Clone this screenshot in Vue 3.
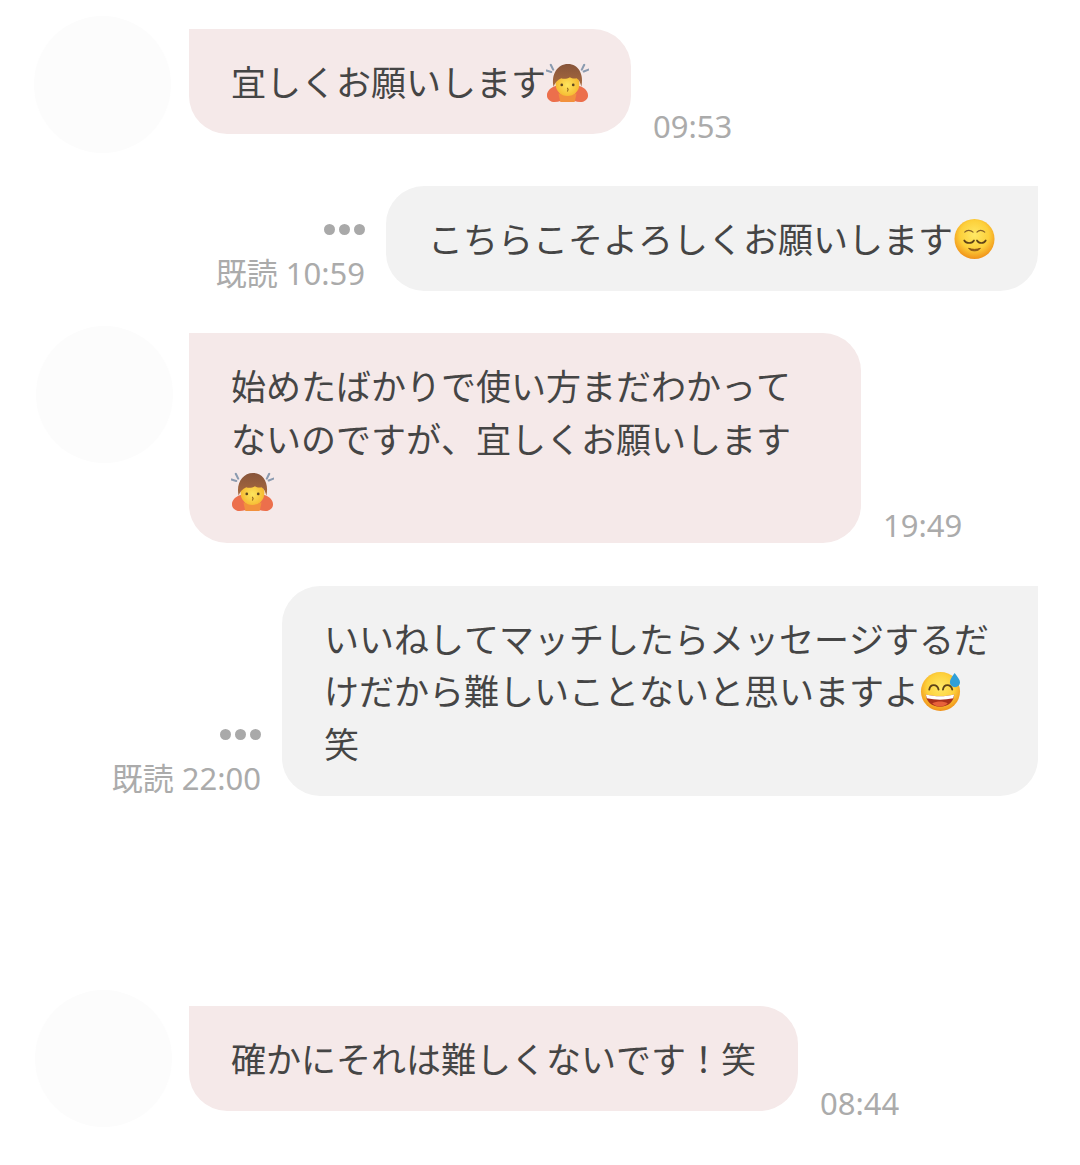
<script setup>
const messages = [
  { id: 1, side: 'left', avatar: 'a1', before: '宜しくお願いします', emoji: 'bow', after: '', time: '09:53', space: 's52' },
  { id: 2, side: 'right', before: 'こちらこそよろしくお願いします', emoji: 'relief', after: '', time: '既読 10:59', space: 's42' },
  { id: 3, side: 'left', avatar: 'a3', before: '始めたばかりで使い方まだわかってないのですが、宜しくお願いします', emoji: 'bow', after: '', time: '19:49', space: 's43', raised: true },
  { id: 4, side: 'right', before: 'いいねしてマッチしたらメッセージするだけだから難しいことないと思いますよ', emoji: 'sweat', after: '笑', time: '既読 22:00', space: 's210' },
  { id: 5, side: 'left', avatar: 'a5', before: '確かにそれは難しくないです！笑', emoji: '', after: '', time: '08:44', space: '' },
]
</script>

<template>
  <main class="chat">
    <svg class="defs" width="0" height="0" aria-hidden="true">
      <defs>
        <radialGradient id="faceGrad" cx="50%" cy="40%" r="60%">
          <stop offset="0%" stop-color="#ffe866" />
          <stop offset="60%" stop-color="#fdd03a" />
          <stop offset="100%" stop-color="#f0911a" />
        </radialGradient>
        <radialGradient id="bowFace" cx="50%" cy="55%" r="55%">
          <stop offset="0%" stop-color="#fde65e" />
          <stop offset="100%" stop-color="#f5b52c" />
        </radialGradient>
        <linearGradient id="hairGrad" x1="0" y1="0" x2="0" y2="1">
          <stop offset="0%" stop-color="#87543a" />
          <stop offset="100%" stop-color="#a96a3e" />
        </linearGradient>
      </defs>
    </svg>

    <section v-for="m in messages" :key="m.id" class="row" :class="[m.side, m.space]">
      <div v-if="m.side === 'left'" class="avatar" :class="m.avatar"></div>

      <div v-if="m.side === 'right'" class="meta">
        <div class="dots"><i></i><i></i><i></i></div>
        <div class="time">{{ m.time }}</div>
      </div>

      <div class="bubble">
        {{ m.before }}<svg v-if="m.emoji === 'bow'" class="emoji bow" viewBox="0 0 45 42" aria-hidden="true">
          <path d="M1 34c0-5 5-9 10-10l4 8h15l4-8c5 1 10 5 10 10 0 4-4 7-8 7-5 0-8-2-10-4h-7c-2 2-5 4-10 4-4 0-8-3-8-7z" fill="#ec6f4c" />
          <path d="M13 32h19l-2 9H15z" fill="#f2913c" />
          <circle cx="22.500" cy="22" r="12.500" fill="url(#bowFace)" />
          <path d="M8 25C5 12 12 1 23 1c11 0 17 11 14 24-1-4-2-7-5-9-3 1-5 0-7-1-3 2-7 2-9 1-4 2-7 5-8 9z" fill="url(#hairGrad)" />
          <circle cx="16.500" cy="23" r="1.400" fill="#5c4520" />
          <circle cx="28.500" cy="23" r="1.400" fill="#5c4520" />
          <path d="M22.500 26.500c.8.800.8 2 0 3" fill="none" stroke="#9a6a20" stroke-width="1.200" stroke-linecap="round" />
          <path d="M5 2l2.500 5M0.500 8l5 1.500M40 2l-2.500 5M44.500 7l-5 2" stroke="#8b9bb0" stroke-width="2.200" stroke-linecap="round" />
        </svg><svg v-else-if="m.emoji === 'relief'" class="emoji" viewBox="0 0 43 43" aria-hidden="true">
          <circle cx="21.500" cy="21.500" r="20.500" fill="url(#faceGrad)" />
          <path d="M11.500 14.500c2-2.500 6-2.500 8.500 0M24 14.500c2-2.500 5.500-2.500 8 0" fill="none" stroke="#8a6428" stroke-width="1.200" stroke-linecap="round" />
          <path d="M11 23c2 3.500 8 3.500 10 0M24 23c2 3.500 7 3.500 9 0" fill="none" stroke="#5e4218" stroke-width="1.700" stroke-linecap="round" />
          <path d="M15.500 31c4 1.500 8 1.500 12 0-2 3.500-10 3.500-12 0z" fill="#8a5518" stroke="#8a5518" stroke-width="1" stroke-linejoin="round" />
        </svg><svg v-else-if="m.emoji === 'sweat'" class="emoji" viewBox="0 0 43 43" aria-hidden="true">
          <circle cx="21.500" cy="22" r="20" fill="url(#faceGrad)" />
          <path d="M10 20c1-6 8-6 9.500 0M24 20c1-6 8-6 9.500 0" fill="none" stroke="#5e4218" stroke-width="1.900" stroke-linecap="round" />
          <path d="M6.500 25c10 2.500 19 2.500 29 0 0 7-6 12.500-14.500 12.500S6.500 32 6.500 25z" fill="#a92f1b" />
          <path d="M6.500 25c10 2.500 19 2.500 29 0l-1 4c-9 1.800-18 1.800-27 0z" fill="#fff" />
          <path d="M13 34c5-2.500 11-2.500 16 0-4.500 4.500-11.500 4.500-16 0z" fill="#e8613a" />
          <path d="M36 3c3 4 5.500 7 5.500 9.500a5.200 5.200 0 0 1-10.400 0C31.100 10 33 7 36 3z" fill="#2f9fd8" />
        </svg>{{ m.after }}
      </div>

      <div v-if="m.side === 'left'" class="time" :class="{ raised: m.raised }">{{ m.time }}</div>
    </section>
  </main>
</template>

<style>
html, body {
  background: #ffffff;
}
</style>

<style scoped>
.chat {
  width: 1080px;
  height: 1165px;
  box-sizing: border-box;
  padding-top: 29px;
  overflow: hidden;
  background: #ffffff;
  font-family: "Noto Sans CJK JP", "Noto Sans", sans-serif;
  color: #454545;
}
.defs {
  position: absolute;
}
.row {
  display: flex;
  align-items: flex-end;
}
.row.left {
  padding-left: 34px;
}
.row.right {
  justify-content: flex-end;
  padding-right: 42px;
}
.s52 { margin-bottom: 52px; }
.s42 { margin-bottom: 42px; }
.s43 { margin-bottom: 42.500px; }
.s210 { margin-bottom: 210px; }

.avatar {
  flex: none;
  align-self: flex-start;
  width: 137px;
  height: 137px;
  margin-top: -13px;
  margin-bottom: -19px;
  margin-right: 18px;
  border-radius: 50%;
  background: #fcfcfc;
}
.a3 {
  margin-top: -7px;
  margin-left: 2px;
  margin-right: 16px;
}
.a5 {
  margin-top: -16px;
  margin-left: 1px;
  margin-right: 17px;
}

.bubble {
  box-sizing: border-box;
  padding: 26.250px 42px;
  font-size: 35px;
  line-height: 52.500px;
  font-kerning: none;
  text-spacing-trim: space-all;
}
.left .bubble {
  max-width: 672px;
  background: #f5e9e9;
  border-radius: 0 38px 38px 38px;
}
.right .bubble {
  max-width: 756px;
  background: #f2f2f2;
  border-radius: 38px 0 38px 38px;
}
.emoji {
  display: inline-block;
  width: 43px;
  height: 42px;
  vertical-align: -7px;
}
.emoji.bow {
  vertical-align: -8px;
}
.time {
  font-family: "Noto Sans", "Noto Sans CJK JP", sans-serif;
  font-size: 31px;
  line-height: 36px;
  color: #ababab;
  white-space: nowrap;
}
.left .time {
  margin-left: 22px;
  margin-bottom: -10px;
}
.left .time.raised {
  margin-bottom: 0;
}
.meta {
  display: flex;
  flex-direction: column;
  align-items: flex-end;
  margin-right: 21px;
}
.dots {
  display: flex;
  gap: 4px;
  margin-bottom: 20px;
}
.dots i {
  display: block;
  width: 11px;
  height: 11px;
  border-radius: 50%;
  background: #a9a9a9;
}
</style>
